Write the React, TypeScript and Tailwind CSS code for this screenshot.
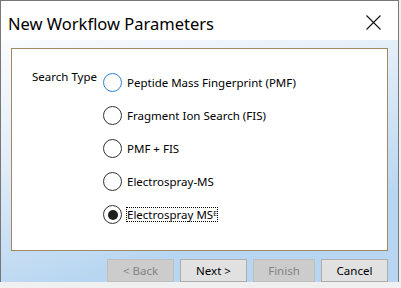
const options = [
  { label: "Peptide Mass Fingerprint (PMF)", hover: true },
  { label: "Fragment Ion Search (FIS)" },
  { label: "PMF + FIS" },
  { label: "Electrospray-MS" },
  { label: "Electrospray MS", sup: "E", checked: true },
];

function Radio({ hover, checked }: { hover?: boolean; checked?: boolean }) {
  return (
    <span
      className={
        "flex h-[19px] w-[19px] shrink-0 items-center justify-center rounded-full border bg-white " +
        (hover ? "border-[#2f7fd0]" : "border-[#333333]")
      }
    >
      {checked && <span className="h-[10px] w-[10px] rounded-full bg-[#1f1f1f]" />}
    </span>
  );
}

function Button({ label, disabled }: { label: string; disabled?: boolean }) {
  return (
    <div
      className={
        "flex h-[23px] items-center justify-center border text-[11.5px] " +
        (disabled
          ? "border-[#bfbfbf] bg-[#cccccc] text-[#838383]"
          : "border-[#adadad] bg-[#e1e1e1] text-black")
      }
    >
      {label}
    </div>
  );
}

export default function App() {
  return (
    <div
      className="h-[288px] w-[401px] overflow-hidden bg-[#f0f0f0] text-black"
      style={{ fontFamily: "'Segoe UI', 'Noto Sans', sans-serif" }}
    >
      <div className="flex h-[282px] w-[399px] flex-col border border-[#777777] bg-white">
        <div className="flex h-[39px] shrink-0 items-start justify-between pl-[7px] pr-[17px] pt-[14px]">
          <span className="text-[16.5px] leading-[18px]">New Workflow Parameters</span>
          <svg width="15" height="15" viewBox="0 0 15 15" className="mt-[0px]">
            <path d="M0.5 0.5L14.5 14.5M14.5 0.5L0.5 14.5" stroke="#111" strokeWidth="1.1" />
          </svg>
        </div>
        <div className="flex flex-1 flex-col bg-[linear-gradient(165deg,#fafcfe_0%,#e2edf8_35%,#b8d6f1_75%)] px-[10px] pt-[8px]">
          <div className="flex h-[203px] border border-[#a08a63] bg-white pl-[20px] pt-[24px]">
            <span className="-mt-[4px] w-[71px] whitespace-nowrap text-[11.5px] leading-[16px]">Search Type</span>
            <div className="flex flex-col gap-[14px]">
              {options.map((o) => (
                <div key={o.label} className="flex h-[19px] items-center gap-[5px]">
                  <Radio hover={o.hover} checked={o.checked} />
                  <span
                    className={
                      "whitespace-nowrap text-[11.5px] leading-[13px] " +
                      (o.checked ? "outline outline-1 outline-dotted outline-black" : "")
                    }
                  >
                    {o.label}
                    {o.sup && <sup className="text-[7px]">{o.sup}</sup>}
                  </span>
                </div>
              ))}
            </div>
          </div>
          <div className="mt-[8px] flex justify-end gap-[6px]">
            <div className="w-[67px]"><Button label="< Back" disabled /></div>
            <div className="w-[67px]"><Button label="Next >" /></div>
            <div className="w-[62px]"><Button label="Finish" disabled /></div>
            <div className="w-[67px]"><Button label="Cancel" /></div>
          </div>
        </div>
      </div>
    </div>
  );
}
